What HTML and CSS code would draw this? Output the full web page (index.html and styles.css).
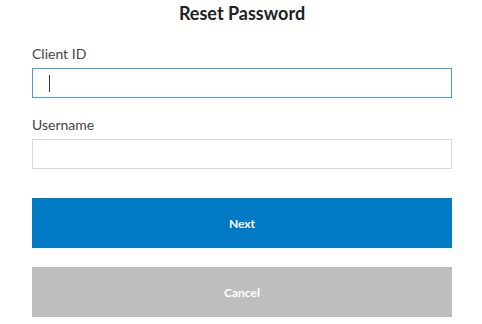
FILE: index.html
```html
<!DOCTYPE html>
<html lang="en">
<head>
  <meta charset="UTF-8">
  <title>Reset Password</title>
  <link rel="stylesheet" href="styles.css">
</head>
<body>
  <main class="reset">
    <h1 class="reset-title">Reset Password</h1>
    <form class="reset-form">
      <div class="field">
        <label for="clientId">Client ID</label>
        <input type="text" id="clientId" class="field-input field-input--focus">
        <span class="caret"></span>
      </div>
      <div class="field">
        <label for="username">Username</label>
        <input type="text" id="username" class="field-input">
      </div>
      <div class="actions">
        <button type="button" class="btn btn-primary">Next</button>
        <button type="button" class="btn btn-muted">Cancel</button>
      </div>
    </form>
  </main>
</body>
</html>
```

FILE: styles.css
```css
:root {
  --primary-color: #007ac3;
  --muted-color: #bebebe;
  --focus-border: #4a9fd5;
  --input-border: #d9d9d9;
  --text-color: #333;
  --font-family: 'Lato', 'Open Sans', sans-serif;
}
* {
  box-sizing: border-box;
}
body {
  margin: 0;
  font-family: var(--font-family);
  color: var(--text-color);
  background: #fff;
}
.reset {
  padding: 0 30px 0 32px;
}
.reset-title {
  margin: 0;
  padding-top: 2px;
  height: 39px;
  font-size: 18px;
  font-weight: 700;
  text-align: center;
  color: #222;
}
.field {
  position: relative;
  margin-bottom: 12px;
}
.field label {
  display: block;
  font-size: 14px;
  line-height: 20px;
  height: 29px;
  padding-top: 5px;
  color: #444;
}
.field-input {
  display: block;
  width: 100%;
  height: 30px;
  margin: 0;
  border: 1px solid var(--input-border);
  border-radius: 0;
  padding: 0 16px;
  font: inherit;
  outline: none;
}
.field-input--focus {
  border-color: var(--focus-border);
}
.caret {
  position: absolute;
  left: 17px;
  top: 36px;
  width: 1px;
  height: 17px;
  background: #333;
}
.actions {
  display: flex;
  flex-direction: column;
  gap: 19px;
  padding-top: 17px;
}
.btn {
  display: block;
  width: 100%;
  height: 50px;
  border: none;
  border-radius: 0;
  font-family: var(--font-family);
  font-size: 12px;
  font-weight: 700;
  color: #fff;
  cursor: pointer;
}
.btn-primary {
  background-color: var(--primary-color);
}
.btn-muted {
  background-color: var(--muted-color);
}
```
